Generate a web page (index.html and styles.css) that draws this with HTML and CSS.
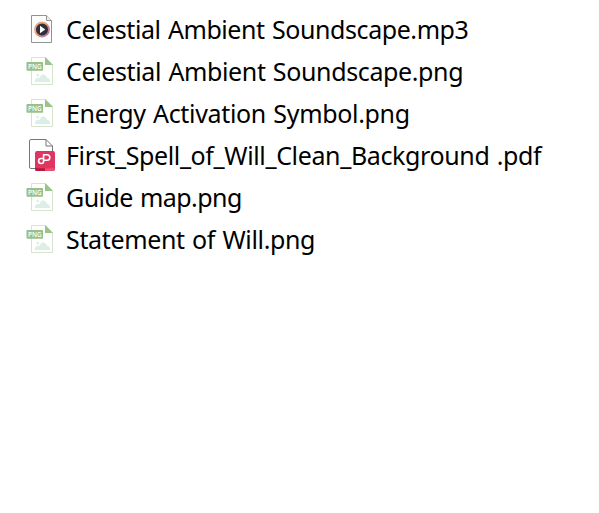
FILE: index.html
```
<!DOCTYPE html>
<html lang="en">
<head>
<meta charset="utf-8">
<title>Files</title>
<link rel="stylesheet" href="styles.css">
</head>
<body>
<svg class="defs" aria-hidden="true">
  <defs>
    <linearGradient id="ring" x1="0" y1="0" x2="1" y2="1">
      <stop offset="0" stop-color="#c9a0b0"/><stop offset=".3" stop-color="#f3ad72"/><stop offset=".6" stop-color="#d98578"/><stop offset="1" stop-color="#9a78d0"/>
    </linearGradient>
    <symbol id="png" viewBox="0 0 44 40">
      <path d="M11.5 7.5H25.5L32.5 14.5V34.5H11.5Z" fill="#fff" stroke="#d3e5cd"/>
      <path d="M25 7V15H33Z" fill="#9bc48b"/>
      <path d="M15 32Q14 30 16 28.8Q18 27 19.5 28Q21 24 23.5 24.2Q26 25 27 27.5Q30.5 29 30 32Z" fill="#ddeee6"/>
      <circle cx="17.7" cy="25" r="1.5" fill="#e2f1ea"/>
      <rect x="6.5" y="12" width="16.5" height="8.7" rx=".7" fill="#97c185"/>
      <text class="badge" x="14.8" y="19" textLength="13.6" lengthAdjust="spacingAndGlyphs">PNG</text>
    </symbol>
  </defs>
</svg>
<ul class="files">
  <li class="file">
    <svg class="icon" viewBox="0 0 44 40">
      <path d="M11.5 7.5H26.5L31.5 12.5V34.5H11.5Z" fill="#fdfdfd" stroke="#929292"/>
      <path d="M26.5 7.5V12.5H31.5" fill="#eee" stroke="#929292"/>
      <circle cx="22" cy="21.5" r="7" fill="#30303a" stroke="url(#ring)" stroke-width="1.9"/>
      <path d="M20 17.7V25.3L25.2 21.5Z" fill="#fff"/>
    </svg>
    <span class="name n1">Celestial Ambient Soundscape.mp3</span>
  </li>
  <li class="file"><svg class="icon"><use href="#png"/></svg><span class="name n2">Celestial Ambient Soundscape.png</span></li>
  <li class="file"><svg class="icon"><use href="#png"/></svg><span class="name n3">Energy Activation Symbol.png</span></li>
  <li class="file">
    <svg class="icon" viewBox="0 0 44 40">
      <path d="M11 5.5H26L32.5 12V34.5H11Q9.5 34.5 9.5 33V7Q9.5 5.5 11 5.5Z" fill="#fff" stroke="#777"/>
      <path d="M26 5.5V12H32.5" fill="none" stroke="#777"/>
      <rect x="15" y="17" width="20" height="20" rx="2" fill="#df3560"/>
      <path d="M15 34.3H25V37H17Q15 37 15 35Z" fill="#b9173c"/>
      <path d="M25 34.3H35V35Q35 37 33 37H25Z" fill="#e9506f"/>
      <path d="M23.6 20.7H27A2.7 2.7 0 0 1 27 26.3H23.6M23.6 24.5H21.1A2.5 2.5 0 0 0 21.1 29.5Q23.6 29.5 23.6 27.5V19.9" fill="none" stroke="#fff" stroke-width="1.6"/>
    </svg>
    <span class="name n4">First_Spell_of_Will_Clean_Background .pdf</span>
  </li>
  <li class="file"><svg class="icon"><use href="#png"/></svg><span class="name n5">Guide map.png</span></li>
  <li class="file"><svg class="icon"><use href="#png"/></svg><span class="name n6">Statement of Will.png</span></li>
</ul>
</body>
</html>
```
FILE: styles.css
```
body { margin: 0; background: #fff; color: #000; font-family: "Segoe UI", "Noto Sans", "Open Sans", sans-serif; }
.defs { display: block; width: 0; height: 0; }
.files { list-style: none; margin: 0; padding: 8px 0 0 20px; }
.file { display: flex; height: 42px; align-items: flex-start; }
.icon { flex: none; width: 44px; height: 40px; margin-right: 2px; }
.name { font-size: 25px; line-height: 42px; white-space: pre; letter-spacing: -0.4px; word-spacing: 1.2px; }
.n1 { letter-spacing: -0.42px; }
.n2 { letter-spacing: -0.37px; }
.n3 { letter-spacing: -0.33px; }
.n4 { letter-spacing: -0.37px; }
.n5 { letter-spacing: -0.55px; }
.n6 { letter-spacing: -0.35px; }
.badge { font: 600 7px "Open Sans", sans-serif; fill: #fff; text-anchor: middle; }
```
